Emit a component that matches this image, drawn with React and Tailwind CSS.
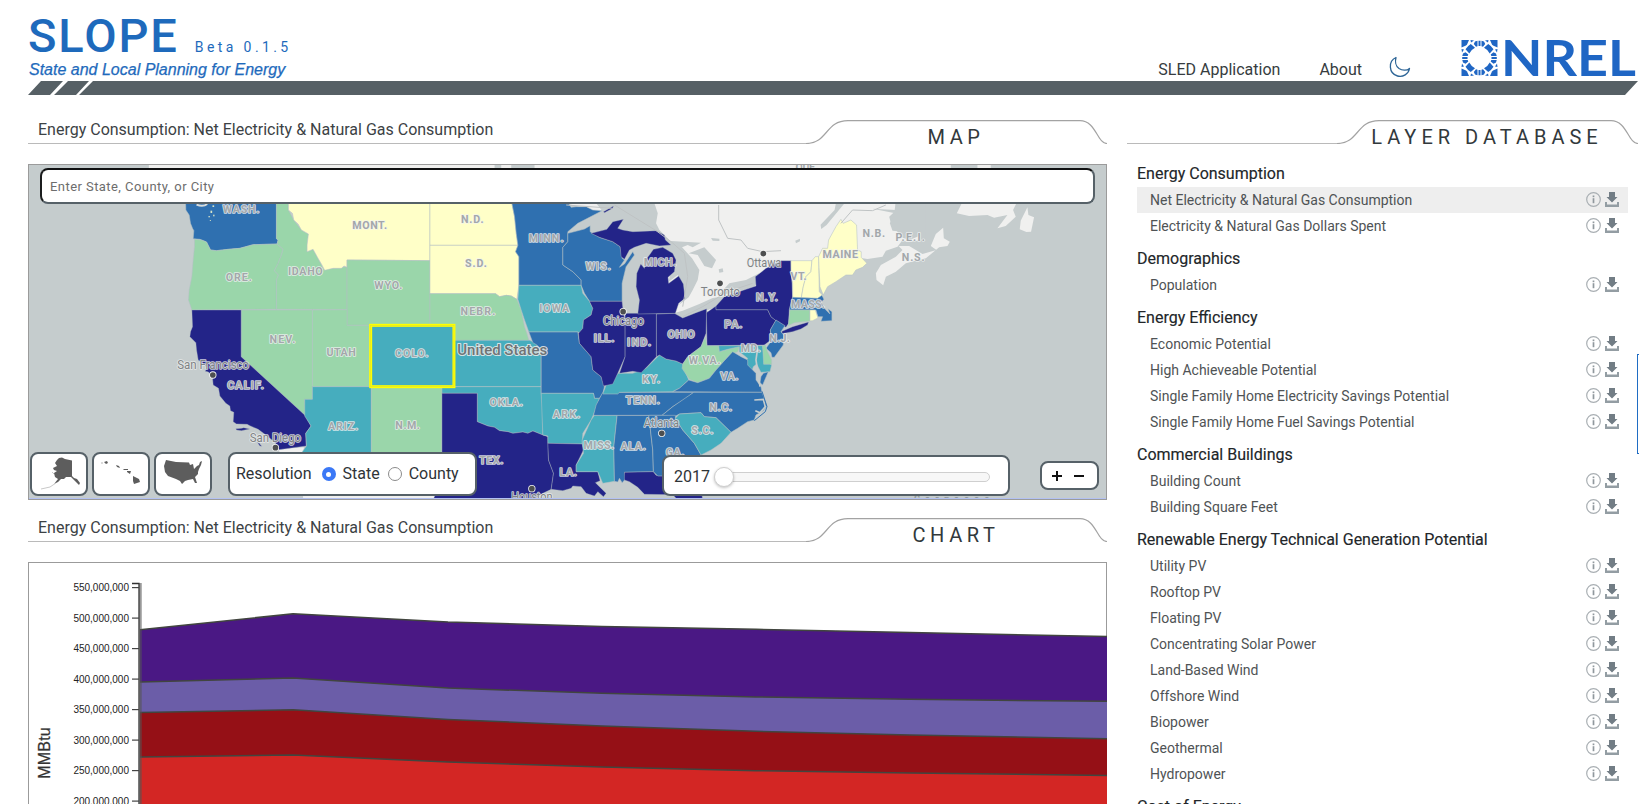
import React from "react";

const C = {
  blue: "#2f70b0",
  green: "#9ad6aa",
  yellow: "#ffffc8",
  navy: "#232488",
  teal: "#46adbe",
  water: "#c5cccd",
  land: "#f0f0ef",
};

// Each region is drawn on a 3x grid; regions are shifted side by side.
const WEST = [
  ["land", "775,866 852,862 852,900 790,900"],
  ["blue", "497,120 498,150 508,165 512,190 518,205 522,212 520,236 540,238 560,246 572,270 590,272 625,268 660,265 700,254 772,252 775,240 770,236 770,120"],
  ["green", "524,238 545,240 560,246 572,270 590,272 625,268 660,265 700,254 772,252 790,268 785,285 775,310 764,332 776,345 770,360 770,448 516,450 506,420 508,390 516,350 520,300 524,260"],
  ["green", "770,120 806,120 806,150 822,180 845,210 866,222 862,275 880,268 895,295 912,328 940,325 982,320 982,449 770,448 770,360 776,345 764,332 775,310 785,285 790,268 772,252 775,240 770,236"],
  ["yellow", "806,120 1231,120 1231,302 982,300 982,322 973,318 965,325 940,325 915,331 905,312 895,295 880,268 862,275 862,255 866,222 845,210 835,192 822,180 818,160 806,150"],
  ["green", "982,300 1231,302 1231,495 982,496"],
  ["green", "664,450 878,450 878,718 855,718 858,768 664,590"],
  ["green", "878,450 982,449 982,496 1052,496 1052,680 878,680"],
  ["navy", "516,450 664,450 664,590 858,768 874,798 858,820 860,858 778,869 768,850 745,830 715,808 690,797 682,793 650,792 640,785 642,757 632,752 630,738 618,730 600,708 596,685 580,675 578,655 566,636 556,634 562,622 548,610 535,600 530,570 528,548 510,530 512,515 518,500"],
  ["navy", "648,806 665,805 672,803 690,807 665,812 650,810"],
  ["navy", "712,845 718,850 726,859 720,858"],
  ["teal", "878,680 1055,680 1055,900 830,900 860,858 858,820 874,798 855,768 855,718 878,718"],
  ["green", "1055,680 1268,680 1266,900 1055,900"],
  ["teal", "1052,496 1302,496 1302,680 1052,680"],
];

const CENTRAL = [
  ["yellow", "91,120 335,120 345,170 350,220 355,256 91,256"],
  ["yellow", "91,256 355,256 348,275 358,290 358,376 352,418 335,408 320,406 300,410 288,401 91,401"],
  ["green", "91,401 288,401 300,410 320,406 335,408 352,418 365,450 375,500 382,520 388,541 165,541 165,495 91,495"],
  ["teal", "165,541 390,541 412,550 412,562 425,572 425,680 165,680"],
  ["teal", "127,680 425,680 425,700 430,740 430,825 400,813 385,820 370,816 340,820 325,815 300,812 285,802 265,798 250,792 233,785 233,700 127,700"],
  ["navy", "127,700 233,700 233,785 250,792 265,798 285,802 300,812 325,815 340,820 370,816 385,820 400,813 430,825 445,830 447,900 462,940 455,988 430,1000 400,1020 100,1020 127,960"],
  ["blue", "335,120 500,120 515,142 530,140 560,140 580,150 608,152 570,172 535,190 505,215 505,245 490,262 490,315 520,335 545,360 545,376 358,376 358,290 348,275 355,256 350,220 345,170"],
  ["blue", "505,220 555,207 572,197 572,215 600,232 640,245 662,260 668,295 675,300 660,322 675,312 700,275 705,285 680,320 668,370 668,424 570,424 555,400 545,376 545,360 520,335 490,315 490,262 505,245"],
  ["teal", "358,376 545,376 550,400 570,424 580,445 575,465 552,480 550,505 540,518 535,516 388,516 375,480 365,450 355,418"],
  ["blue", "388,516 535,516 540,550 575,590 580,630 605,650 615,680 610,700 600,715 585,715 582,700 425,700 425,570 412,555 400,548"],
  ["teal", "425,700 582,700 585,715 600,715 590,745 575,780 550,820 548,852 445,850 445,828 430,825"],
  ["navy", "445,850 548,852 552,870 530,915 530,935 595,935 602,962 588,968 600,980 620,1000 612,1010 595,995 585,1008 560,1000 545,980 520,978 515,985 490,992 455,988 462,940 447,900"],
  ["teal", "585,766 653,766 643,860 645,964 610,970 595,935 530,935 530,915 552,880 548,840 575,780"],
  ["blue", "653,766 748,766 760,870 762,935 675,937 680,955 668,968 660,955 655,966 645,964 643,860"],
  ["navy", "675,937 762,935 770,946 900,948 910,1020 835,1020 820,1004 735,1003 715,982 690,965 675,960"],
  ["blue", "610,697 883,697 860,715 820,740 788,766 582,766 590,735"],
  ["teal", "655,640 700,640 740,625 765,600 780,585 800,597 830,603 850,612 860,640 868,660 840,685 820,695 660,697 655,702 610,702 620,675 640,665"],
  ["navy", "570,424 668,424 672,460 677,480 677,590 655,640 640,672 612,678 605,650 580,630 575,590 540,550 537,520 550,505 552,480 575,465 580,445"],
  ["navy", "677,460 771,460 771,590 745,618 725,638 700,634 660,640 677,590"],
  ["navy", "771,462 825,460 850,474 890,458 922,446 920,520 905,560 865,590 850,612 830,603 800,597 780,585 771,590"],
  ["navy", "762,268 790,262 820,280 830,300 825,335 806,352 808,370 838,348 852,372 857,415 838,430 828,460 715,462 720,420 710,380 712,340 724,312 735,325 738,300 750,285"],
  ["navy", "575,220 622,208 640,185 672,178 655,205 670,210 700,215 770,212 795,225 798,240 815,255 780,258 740,250 705,262 690,270 675,298 665,290 662,260 640,245 600,232"],
  ["navy", "612,155 642,138 640,145 615,158"],
  ["navy", "921,458 950,438 950,449 1105,449 1115,470 1130,482 1113,510 1115,540 1095,555 923,557"],
  ["green", "918,530 923,557 958,557 960,575 985,568 1020,560 1015,575 990,585 975,602 950,630 930,655 895,668 870,658 848,625 850,612 865,590 905,560"],
  ["teal", "958,557 1090,557 1095,600 1117,615 1112,635 1085,637 1072,612 1062,620 1058,632 1038,610 1045,595 1020,575 1020,560 985,568 960,575"],
  ["blue", "820,695 840,685 868,660 895,668 930,655 950,630 975,602 1000,575 1025,590 1045,600 1045,615 1070,640 1070,660 1085,680 1088,697"],
  ["blue", "883,697 1088,697 1103,738 1092,752 1070,765 1065,780 1045,785 1015,805 995,817 950,773 915,770 905,758 840,762 825,770 788,766 820,740"],
  ["blue", "748,766 828,766 828,775 850,810 885,850 905,885 900,948 775,948 762,935 760,870"],
  ["teal", "840,762 905,758 915,770 950,773 995,817 965,850 935,870 905,885 885,850 850,810 828,775"],
];

const EAST = [
  ["navy", "-70,438 -45,410 20,388 50,378 48,350 80,325 125,302 155,302 160,410 150,450 148,490 140,502 110,482 95,470 85,449 -70,449"],
  ["navy", "128,514 160,500 208,486 205,495 185,507 160,515 128,521"],
  ["yellow", "155,302 218,302 215,335 200,350 192,380 186,414 160,412 160,370 155,340"],
  ["yellow", "218,302 228,290 238,290 240,395 252,408 235,415 186,414 192,380 200,350 215,335"],
  ["yellow", "238,290 250,265 265,265 268,240 290,200 305,178 312,190 335,180 352,195 355,270 366,275 366,292 383,310 370,322 350,330 340,345 320,345 290,365 265,380 252,405 242,380"],
  ["blue", "160,412 235,415 248,406 254,418 245,428 258,448 272,462 266,446 278,455 278,482 245,484 250,470 236,470 230,450 150,450"],
  ["green", "152,450 212,450 212,483 165,488 147,497"],
  ["yellow", "212,450 228,450 236,474 220,482 212,483"],
  ["blue", "110,480 137,497 125,515 133,525 132,555 105,592 98,592 95,578 80,565 98,540 93,510"],
  ["green", "70,557 78,555 85,575 97,600 97,613 73,613"],
  ["blue", "65,650 72,640 87,635 70,675 62,668"],
];

const CANADA = [
  ["land", "-560,120 470,120 466,155 450,170 455,190 475,215 490,240 475,260 440,272 430,290 385,297 370,295 340,330 150,320 60,390 -60,450 -190,462 -230,400 -250,200"],
  ["water", "316,130 262,195 246,207 244,194 286,150 290,130"],
  ["water", "400,146 470,150 470,130 560,130 560,240 490,215 460,212 452,190 468,160"],
  ["land", "410,340 425,315 470,290 490,270 478,258 510,258 550,282 592,270 575,258 590,222 612,203 614,235 632,245 625,258 600,262 560,295 500,310 470,335 440,350 432,376 412,360"],
  ["land", "476,228 500,236 520,236 540,228 535,242 505,245 480,240"],
  ["land", "668,130 653,160 690,168 745,165 765,173 805,165 775,205 800,198 830,170 822,150 832,130"],
  ["land", "845,182 865,142 868,165 885,172 876,215 862,216 842,208"],
  ["water", "168,242 182,236 182,244 170,250"],
];

const LAKES = [
  ["water", "505,222 535,190 570,172 608,152 590,130 765,130 775,160 770,190 780,210 815,245 790,262 740,255 700,262 640,245 570,222"],
  ["water", "668,424 664,370 680,300 700,262 740,248 790,262 750,285 710,345 722,420 715,462 672,462"],
  ["water", "780,258 815,243 905,248 880,262 865,255 848,262 878,295 900,330 895,360 880,390 868,412 835,437 856,415 835,345 808,365 820,300"],
  ["water", "868,280 915,262 950,300 938,325 915,318 895,285"],
  ["water", "822,460 850,452 900,432 940,414 980,408 950,442 890,462 850,476"],
  ["water", "960,402 990,370 1040,360 1080,340 1068,378 1040,388 985,402"],
  ["water", "935,234 960,236 960,243 940,242"],
  ["water", "958,328 970,325 972,336 960,338"],
];

const LINES = [
  "M1640 135 L1780 145",
  "M1785 135 L1910 212 L1955 245 L1995 280 L2005 350 L1990 440",
  "M2098 135 V180 L2125 235 L2165 240 L2185 265 L2230 275 L2285 272",
  "M2465 190 L2500 150 L2560 152 L2600 135",
  "M1990 470 L2050 440 L2125 395 L2200 370",
];

// text, centre x, baseline, drawn width
const STATES = [
  ["WASH.", 664, 158, 110], ["MONT.", 1050, 208, 104], ["ORE.", 657, 362, 78], ["IDAHO", 857, 344, 104],
  ["WYO.", 1106, 386, 84], ["NEV.", 788, 550, 78], ["UTAH", 964, 588, 88], ["COLO.", 1176, 591, 100],
  ["CALIF.", 677, 687, 110], ["ARIZ.", 970, 811, 90], ["N.M.", 1164, 807, 74], ["N.D.", 1358, 189, 68],
  ["S.D.", 1369, 320, 66], ["NEBR.", 1375, 466, 104], ["MINN.", 1580, 246, 104], ["WIS.", 1736, 329, 76],
  ["MICH.", 1922, 317, 98], ["IOWA", 1604, 456, 90], ["ILL.", 1754, 547, 62], ["IND.", 1859, 557, 72],
  ["OHIO", 1985, 535, 82], ["PA.", 2142, 503, 54], ["W.VA.", 2056, 611, 96], ["VA.", 2130, 660, 54],
  ["KY.", 1895, 668, 54], ["OKLA.", 1460, 738, 100], ["ARK.", 1641, 773, 82], ["TENN.", 1870, 733, 102],
  ["N.C.", 2104, 753, 68], ["S.C.", 2049, 822, 66], ["MISS.", 1738, 868, 92], ["ALA.", 1841, 870, 76],
  ["GA.", 1967, 888, 56], ["TEX.", 1415, 913, 72], ["LA.", 1646, 948, 52], ["MAINE", 2463, 293, 106],
  ["VT.", 2338, 361, 48], ["N.Y.", 2243, 424, 66], ["MASS.", 2366, 445, 102], ["N.J.", 2281, 546, 62],
  ["MD.", 2194, 577, 60], ["N.B.", 2564, 230, 68], ["P.E.I.", 2673, 243, 88], ["N.S.", 2682, 304, 68],
  ["QUE.", 2362, 34, 66],
];

const CITIES = [
  ["San Francisco", 580, 626, 216, 579, 645],
  ["San Diego", 767, 846, 154, 767, 863],
  ["Chicago", 1812, 495, 122, 1811, 455],
  ["Toronto", 2103, 409, 118, 2102, 370],
  ["Ottawa", 2234, 321, 104, 2232, 281],
  ["Atlanta", 1926, 801, 106, 1927, 820],
  ["Houston", 1537, 1022, 124, 1537, 986],
];

function Shapes({ list, x = 0, stroke = true }) {
  return (
    <g transform={`translate(${x} 0)`}>
      {list.map(([c, pts], i) => (
        <polygon
          key={i}
          points={pts}
          fill={C[c]}
          stroke={stroke && c !== "land" ? "#b3c0c4" : "none"}
          strokeWidth={c === "navy" ? 1.4 : 2}
          strokeOpacity="0.8"
          strokeLinejoin="round"
        />
      ))}
    </g>
  );
}

function UsMap() {
  return (
    <svg className="absolute inset-0 size-full" viewBox="29 165 1078 334" preserveAspectRatio="none">
      <rect x="28" y="164" width="1080" height="336" fill={C.water} />
      <g transform="translate(20 160) scale(0.33333)">
        <rect x="387" y="10" width="2408" height="16" fill={C.land} />
        <rect x="2875" y="10" width="40" height="16" fill={C.land} />
        <rect x="1425" y="10" width="20" height="16" fill={C.water} />
        <rect x="1475" y="10" width="70" height="16" fill={C.water} />
        <rect x="850" y="1000" width="400" height="20" fill={C.land} />
        <Shapes list={CANADA} x={2160} stroke={false} />
        <Shapes list={LAKES} x={1140} stroke={false} />
        <Shapes list={WEST} />
        <Shapes list={CENTRAL} x={1140} />
        <Shapes list={EAST} x={2160} />
        {LINES.map((d) => (
          <path key={d} d={d} fill="none" stroke="#bfc3c4" strokeWidth="3" />
        ))}
        <path d="M530 134 q20 8 32 -2" stroke="#d8dcdc" strokeWidth="6" fill="none" />
        <g fill="#d7e3c8">
          <rect x="578" y="136" width="5" height="5" />
          <rect x="572" y="152" width="5" height="7" />
          <rect x="580" y="164" width="4" height="5" />
          <rect x="566" y="168" width="4" height="4" />
          <rect x="570" y="180" width="3" height="3" />
        </g>
        <g fill="none" stroke={C.water} strokeWidth="5">
          <path d="M2215 565 L2210 600 L2216 640 L2222 680" />
          <path d="M2205 720 L2232 718 L2238 740 L2222 758 L2208 752" />
        </g>
        <path d="M2228 694 L2243 740 L2238 755 L2205 782" fill="none" stroke={C.blue} strokeWidth="3" />
        <rect x="1053" y="496" width="250" height="184" fill="none" stroke="#ffff00" strokeWidth="9" />
        <rect x="1053" y="496" width="250" height="184" fill="none" stroke="#d8dc3c" strokeWidth="1.5" />
        <g fontFamily="Roboto, sans-serif" textAnchor="middle" strokeLinejoin="round" style={{ paintOrder: "stroke" }}>
          {STATES.map(([t, x, y, w]) => (
            <text key={t} x={x} y={y} textLength={w} fontSize="32" fontWeight="700" fill="#a3a7aa" stroke="#f1f3f3" strokeOpacity="0.85" strokeWidth="5">
              {t}
            </text>
          ))}
          {CITIES.map(([t, x, y, w, dx, dy]) => (
            <g key={t}>
              <circle cx={dx} cy={dy} r="8.5" fill="#4d4f50" stroke="#f4f5f5" strokeWidth="5" />
              <text x={x} y={y} textLength={w} lengthAdjust="spacingAndGlyphs" fontSize="36" fill="#7f8385" stroke="#eceeee" strokeOpacity="0.85" strokeWidth="5">
                {t}
              </text>
            </g>
          ))}
          <text x="1448" y="584" textLength="270" lengthAdjust="spacingAndGlyphs" fontSize="42" fontWeight="500" fill="#6f7375" stroke="#e6eaea" strokeOpacity="0.9" strokeWidth="6">
            United States
          </text>
          <text x="2797" y="1029" textLength="228" fontSize="31" fontStyle="italic" fontWeight="500" fill="#8f999c">
            Sargasso
          </text>
        </g>
      </g>
      <rect x="28" y="498" width="1080" height="1.2" fill="#b3c1f2" />
    </svg>
  );
}

function TabHeader({ title, label, spacing = "tracking-[4.6px]" }) {
  return (
    <div className="flex h-6 items-end">
      <div className="flex h-full flex-1 items-start border-b border-[#bababa] pl-2.5">
        <span className="-mt-0.5 whitespace-nowrap text-base leading-6 text-[#3c4245]">{title}</span>
      </div>
      <div className="relative h-6 w-[301px]">
        <svg className="absolute inset-0" width="301" height="24" fill="none" stroke="#a3a3a3" strokeWidth="1.2">
          <path d="M0 23.5 C22 23.5 19 0.6 42 0.6 H274 C290 0.6 291 23.5 301 23.5" />
        </svg>
        <div className={`relative pr-px pt-[5px] text-center text-xl leading-6 text-[#32393c] ${spacing}`}>{label}</div>
      </div>
    </div>
  );
}

const BOX = "flex items-center rounded-lg border-2 border-[#566168] bg-white";

function MapPanel() {
  return (
    <div className="relative mt-5 h-[336px] overflow-hidden border border-[#9b9b9b]">
      <UsMap />
      <div className="absolute left-[11px] top-[3px] flex h-9 w-[1055px] items-center rounded-lg border-2 border-[#566168] border-l-[#1b1d1e] border-t-[#101112] bg-white pl-2 pt-0.5 text-[13px] tracking-[0.44px] text-[#6d6d6d]">
        Enter State, County, or City
      </div>
      <div className="absolute bottom-[3px] left-px flex gap-1">
        <div className={`${BOX} h-11 w-[58px]`}>
          <svg width="54" height="40" fill="#5d5d5d">
            <path d="M25 6 L27 4 L30 3.500 L33 5 L40 6.500 V22 L42 24 L45 25 L48 29 L47 31 L43 27 L39 23 L34 23 L32 25 L29 25 L26 28 L22 30 L26 25 L23 23 L22 19 L25 17 L22 16 L21 14 L25 12 L23 9 Z" />
            <path d="M24 29 L18 33 L9 35 M20 18 L22 20" stroke="#c9c9c9" fill="none" />
          </svg>
        </div>
        <div className={`${BOX} h-11 w-[58px]`}>
          <svg width="54" height="40" fill="#5d5d5d">
            <path d="M10 8 L13 7 L14 9 L12 10 Z M22 11 L25 12 L26 14 L23 13 Z M29 15 L34 15 L34 16 L30 16 Z M33 17 L37 17 L36 20 L33 18 Z M39 22 L45 25 L46 28 L40 30 L39 27 Z" />
            <circle cx="8" cy="9" r="0.7" fill="#999" />
          </svg>
        </div>
        <div className={`${BOX} h-11 w-[58px]`}>
          <svg width="54" height="40" fill="#5d5d5d">
            <path d="M10 6 L20 8 L33 8.500 L34 11 L37 10 L38 15 L41 12 L43 11 L44 8 L46 7 L45 11 L43 15 L42 18 L42 20 L39 23 L41 29 L39 29 L37 25 L32 26 L29 27 L26 30 L24 27 L20 25 L12 22 L9 18 L8 12 Z" />
          </svg>
        </div>
      </div>
      <div className={`${BOX} absolute bottom-[3px] left-[199px] h-11 w-[249px] pl-1.5 text-base text-[#2f3437]`}>
        Resolution
        <span className="ml-2.5 mr-[7px] flex size-[14px] items-center justify-center rounded-full bg-[#3b78f6]">
          <span className="size-[5px] rounded-full bg-white" />
        </span>
        State
        <span className="ml-2 mr-[7px] size-[14px] rounded-full border border-[#8b8b8b] bg-white" />
        County
      </div>
      <div className={`${BOX} absolute bottom-[3px] left-[633px] h-[41px] w-[348px] pl-2.5 pt-0.5 text-base text-[#2f3437]`}>
        2017
        <div className="relative ml-[15px] h-2.5 w-[265px] rounded-md border border-[#cfcfcf] bg-[#f7f7f7]">
          <span className="absolute -left-3 -top-1.5 size-5 rounded-full border border-[#cfcfcf] bg-white shadow-[0_1px_3px_rgba(0,0,0,0.25)]" />
        </div>
      </div>
      <div className={`${BOX} absolute bottom-[9px] left-[1011px] h-[29px] w-[59px] justify-center pr-[3px]`}>
        <svg width="34" height="12" stroke="#111" strokeWidth="2">
          <path d="M1 6 H11 M6 1 V11 M23 6 H33" />
        </svg>
      </div>
    </div>
  );
}

const SERIES_X = [140, 293, 448, 602, 756, 910, 1107];
const SERIES = [
  ["#4a1884", [629.8, 613.8, 622, 626.5, 629.3, 632.5, 636.5]],
  ["#6b5da8", [682, 678, 688, 693.3, 697, 699.3, 701.3]],
  ["#951016", [712.5, 709.8, 719.5, 726, 731.3, 735, 738.8]],
  ["#d32624", [757, 755, 762, 767, 770.7, 773, 775.5]],
];
const TICKS = ["550,000,000", "500,000,000", "450,000,000", "400,000,000", "350,000,000", "300,000,000", "250,000,000", "200,000,000"];

function ChartPanel() {
  return (
    <div className="relative mt-5 h-[300px] border border-[#9b9b9b]">
      <svg className="relative -mr-px block h-[260px] w-[1079px]" viewBox="29 563 1079 260">
        {SERIES.map(([fill, ys]) => {
          const line = ys.map((y, i) => `${SERIES_X[i]},${y}`).join(" ");
          return (
            <g key={fill}>
              <polygon points={`${line} 1107,830 140,830`} fill={fill} />
              <polyline points={line} fill="none" stroke="#41453f" strokeWidth="1.5" />
            </g>
          );
        })}
        <path d="M140.500 583 V830" stroke="#555" strokeOpacity="0.6" strokeWidth="2.500" />
        <path d="M132 583.5 H139 V830" fill="none" stroke="#333" strokeWidth="1.3" />
        {TICKS.map((t, i) => (
          <g key={t}>
            <path d={`M132 ${587.6 + i * 30.5} h7`} stroke="#444" strokeWidth="1.2" />
            <text x="129" y={591 + i * 30.5} textAnchor="end" fontFamily="Liberation Sans, sans-serif" fontSize="10" fill="#222">
              {t}
            </text>
          </g>
        ))}
        <text transform="translate(50 753) rotate(-90)" textAnchor="middle" fontFamily="Liberation Sans, sans-serif" fontSize="16" fill="#333" stroke="#333" strokeWidth="0.25" textLength="51.500">
          MMBtu
        </text>
      </svg>
    </div>
  );
}

const LAYERS = [
  ["Energy Consumption", ["Net Electricity & Natural Gas Consumption", "Electricity & Natural Gas Dollars Spent"]],
  ["Demographics", ["Population"]],
  ["Energy Efficiency", ["Economic Potential", "High Achieveable Potential", "Single Family Home Electricity Savings Potential", "Single Family Home Fuel Savings Potential"]],
  ["Commercial Buildings", ["Building Count", "Building Square Feet"]],
  ["Renewable Energy Technical Generation Potential", ["Utility PV", "Rooftop PV", "Floating PV", "Concentrating Solar Power", "Land-Based Wind", "Offshore Wind", "Biopower", "Geothermal", "Hydropower"]],
  ["Cost of Energy", []],
];

function LayerRow({ name, active }) {
  return (
    <div className={`flex h-[26px] items-center pl-[13px] pr-[9px] text-sm text-[#4f5355] ${active ? "bg-[#eeeeee]" : ""}`}>
      <span className="flex-1 whitespace-nowrap">{name}</span>
      <svg width="15" height="15" viewBox="0 0 15 15" className="mr-1 -mt-0.5">
        <circle cx="7.500" cy="7.500" r="6.800" fill="none" stroke="#a9afb3" strokeWidth="1.2" />
        <path d="M7.500 6.200 V11.200" stroke="#90989d" strokeWidth="1.700" />
        <rect x="6.650" y="3.500" width="1.700" height="1.700" fill="#90989d" />
      </svg>
      <svg width="14" height="15" viewBox="0 0 14 15" className="-mt-0.5">
        <path d="M4 0 H10 V5 H12.500 L7 10.500 L1.500 5 H4 Z" fill="#727d85" />
        <path d="M0 10 H2 V12.500 H12 V10 H14 V15 H0 Z" fill="#939da3" />
      </svg>
    </div>
  );
}

function NrelLogo() {
  return (
    <svg width="178" height="38" viewBox="0 0 178 38" fill="#1f66c4">
      <g transform="translate(1.500 1)">
        {[0, 90, 180, 270].map((a) => (
          <g key={a} transform={`rotate(${a} 18 18)`}>
            <path d="M0 0 H7.500 L5.500 4.500 L4.500 5.500 L0 7.500 Z" />
            <path d="M9 0 L12.500 0.500 L9.500 2.500 Z M0 9 L0.500 12.500 L2.500 9.500 Z" />
            <path d="M9.300 4 L13.500 7.800 Q9.500 9.800 7.800 13.500 L4 9.300 Q6 6 9.300 4 Z" />
            <path d="M13.500 1.500 L16 0.800 V6.200 L14.500 6.800 L12.300 4 Z M17 0.700 H19 V6 H17 Z M20 0.800 L22.500 1.500 L23.700 4 L21.500 6.800 L20 6.200 Z" />
          </g>
        ))}
      </g>
      <text x="41" y="37" fontFamily="Lato, sans-serif" fontWeight="700" fontSize="50" textLength="135" lengthAdjust="spacingAndGlyphs">
        NREL
      </text>
    </svg>
  );
}

export default function App() {
  return (
    <div className="relative h-[804px] w-[1639px] overflow-hidden bg-white font-['Roboto',sans-serif]">
      <header className="flex h-[81px] items-end justify-between pl-7 text-[#1e6abc]">
        <div className="flex flex-col">
          <div className="mb-px flex items-baseline">
            <span className="text-[47px] font-medium leading-[47px] tracking-[1.9px]">SLOPE</span>
            <span className="ml-4 text-sm tracking-[3.4px]">Beta 0.1.5</span>
          </div>
          <div className="mb-px pl-px font-['Liberation_Sans',sans-serif] text-base italic leading-5 [-webkit-text-stroke:0.25px_#1e6abc]">
            State and Local Planning for Energy
          </div>
        </div>
        <nav className="flex items-end text-base leading-[22px] text-[#363c40]">
          <span className="mr-[39px]">SLED Application</span>
          <span className="mr-[27px]">About</span>
          <svg className="mb-[3px] mr-[49px]" width="22" height="22" fill="none" stroke="#2c6496" strokeWidth="1.3" strokeLinejoin="round">
            <path d="M7 1.500 C-1 5 -0.500 17.500 8.500 20 C14 21.500 19.500 18 20.500 12.500 C18 15 13 14.500 10 12.500 C6.500 10 6 5 7 1.500 Z" />
          </svg>
          <div className="mb-1 mr-px">
            <NrelLogo />
          </div>
        </nav>
      </header>
      <svg className="ml-7 block" width="1611" height="14" fill="#566065">
        <path d="M13 0 H35 L22 14 H0 Z M40 0 H61 L48 14 H26 Z M65 0 H1610 L1597 14 H51 Z" />
      </svg>

      <main className="flex gap-5 pl-7 pt-[25px]">
        <div className="w-[1079px]">
          <TabHeader title="Energy Consumption: Net Electricity & Natural Gas Consumption" label="MAP" />
          <MapPanel />
          <div className="mt-[18px]">
            <TabHeader title="Energy Consumption: Net Electricity & Natural Gas Consumption" label="CHART" />
            <ChartPanel />
          </div>
        </div>
        <div className="w-[511px]">
          <TabHeader title="" label="LAYER DATABASE" spacing="tracking-[5px]" />
          <div className="ml-2.5 mr-2.5 mt-2.5">
            {LAYERS.map(([group, rows], g) => (
              <section key={group}>
                <h2 className="flex h-[33px] items-end pb-px text-base leading-6 text-[#222629] [-webkit-text-stroke:0.15px_#222629]">{group}</h2>
                {rows.map((r, i) => (
                  <LayerRow key={r} name={r} active={g === 0 && i === 0} />
                ))}
              </section>
            ))}
          </div>
        </div>
      </main>
      <div className="absolute right-0 top-[354px] h-[100px] w-0.5 border-y border-l border-[#1f6dc4]" />
    </div>
  );
}
